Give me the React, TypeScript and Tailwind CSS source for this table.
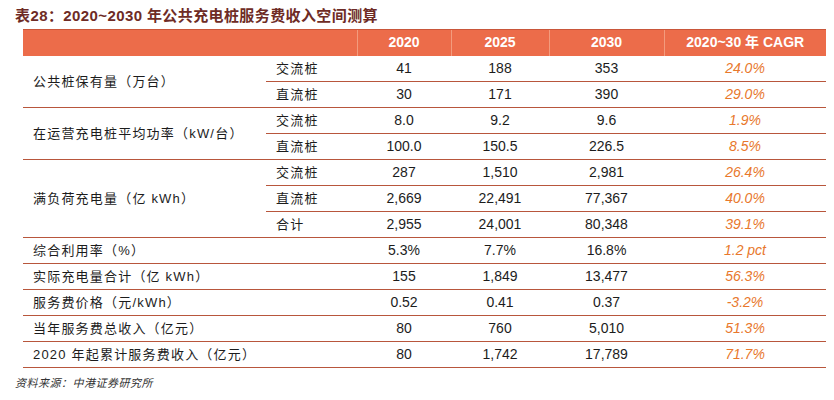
const cjk = "font-['Liberation_Sans','Noto_Sans_CJK_SC',sans-serif]";

type Row = {
  label?: string;
  span?: number;
  sub?: string;
  vals: string[];
  cagr: string;
};

const rows: Row[] = [
  { label: '公共桩保有量（万台）', span: 2, sub: '交流桩', vals: ['41', '188', '353'], cagr: '24.0%' },
  { sub: '直流桩', vals: ['30', '171', '390'], cagr: '29.0%' },
  { label: '在运营充电桩平均功率（kW/台）', span: 2, sub: '交流桩', vals: ['8.0', '9.2', '9.6'], cagr: '1.9%' },
  { sub: '直流桩', vals: ['100.0', '150.5', '226.5'], cagr: '8.5%' },
  { label: '满负荷充电量（亿 kWh）', span: 3, sub: '交流桩', vals: ['287', '1,510', '2,981'], cagr: '26.4%' },
  { sub: '直流桩', vals: ['2,669', '22,491', '77,367'], cagr: '40.0%' },
  { sub: '合计', vals: ['2,955', '24,001', '80,348'], cagr: '39.1%' },
  { label: '综合利用率（%）', vals: ['5.3%', '7.7%', '16.8%'], cagr: '1.2 pct' },
  { label: '实际充电量合计（亿 kWh）', vals: ['155', '1,849', '13,477'], cagr: '56.3%' },
  { label: '服务费价格（元/kWh）', vals: ['0.52', '0.41', '0.37'], cagr: '-3.2%' },
  { label: '当年服务费总收入（亿元）', vals: ['80', '760', '5,010'], cagr: '51.3%' },
  { label: '2020 年起累计服务费收入（亿元）', vals: ['80', '1,742', '17,789'], cagr: '71.7%' },
];

const line = 'border-b border-[#b8563c]';

export default function App() {
  return (
    <div className={`w-[834px] h-[400px] bg-white px-[15px] pt-[6px] ${cjk}`}>
      <h1 className="text-[15px] leading-[20px] font-bold text-[#6e2b25] tracking-[0.4px]">
        表28：2020~2030 年公共充电桩服务费收入空间测算
      </h1>
      <table className="mt-[3px] ml-[8px] w-[803px] table-fixed border-collapse text-[14px] text-[#1c1c1c]">
        <colgroup>
          <col className="w-[243px]" />
          <col className="w-[91px]" />
          <col className="w-[94px]" />
          <col className="w-[98px]" />
          <col className="w-[115px]" />
          <col className="w-[162px]" />
        </colgroup>
        <thead>
          <tr className="h-[26px] bg-[#ec6c4a] text-white font-bold">
            <th colSpan={2} className="border-t border-[#c9563a]"></th>
            {['2020', '2025', '2030', '2020~30 年 CAGR'].map((h) => (
              <th key={h} className="border-t border-l border-t-[#c9563a] border-l-[#f39b7d] text-center font-bold">
                {h}
              </th>
            ))}
          </tr>
        </thead>
        <tbody>
          {rows.map((r, i) => (
            <tr key={i} className="h-[26px]">
              {r.label && r.span && (
                <td rowSpan={r.span} className={`${line} pl-[10px] text-[13px] tracking-[1.2px] align-middle`}>
                  {r.label}
                </td>
              )}
              {r.label && !r.span && (
                <td colSpan={2} className={`${line} pl-[10px] text-[13px] tracking-[1.2px]`}>
                  {r.label}
                </td>
              )}
              {r.sub && (
                <td className={`${line} pl-[10px] text-[13px] tracking-[1.2px]`}>{r.sub}</td>
              )}
              {r.vals.map((v, j) => (
                <td key={j} className={`${line} text-center`}>
                  {v}
                </td>
              ))}
              <td className={`${line} text-center italic text-[#e8782c]`}>{r.cagr}</td>
            </tr>
          ))}
        </tbody>
      </table>
      <p className="mt-[7px] text-[11px] leading-[16px] italic text-[#333] tracking-[0.5px]">资料来源：中港证券研究所</p>
    </div>
  );
}
